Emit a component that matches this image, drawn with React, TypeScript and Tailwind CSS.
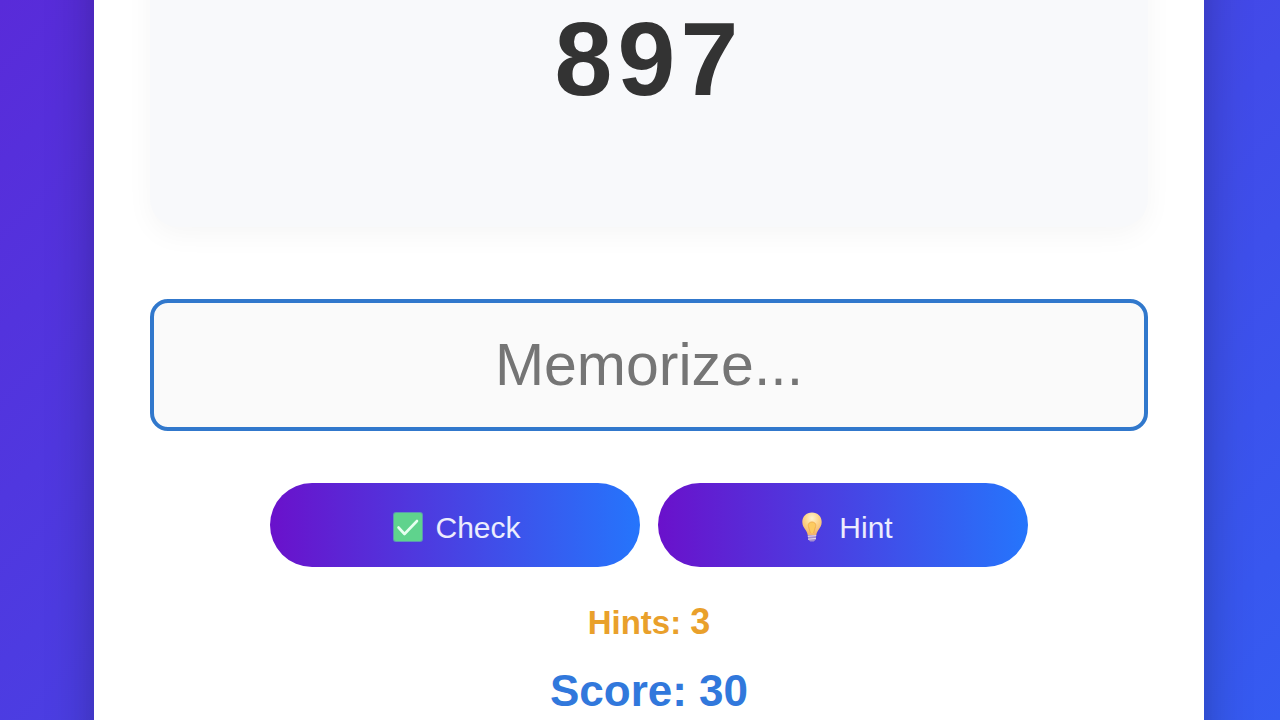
import { useState } from 'react'

const CheckIcon = () => (
  <svg viewBox="0 0 38 38" className="size-[38px]" aria-hidden="true">
    <rect x="4" y="4" width="30" height="30" rx="3" fill="#5b97b4" />
    <rect x="5" y="5" width="28" height="28" rx="2" fill="#5fd38d" />
    <path
      d="M9.5 19.5 L15.5 26 L28 13"
      fill="none"
      stroke="#e6fff0"
      strokeWidth="2.6"
      strokeLinecap="round"
      strokeLinejoin="round"
    />
  </svg>
)

const BulbIcon = () => (
  <svg viewBox="0 0 38 38" className="size-[38px]" aria-hidden="true">
    <defs>
      <radialGradient id="bulb" cx="0.5" cy="0.25" r="0.7">
        <stop offset="0" stopColor="#fff3d0" />
        <stop offset="0.5" stopColor="#fdd58a" />
        <stop offset="1" stopColor="#f3b46c" />
      </radialGradient>
    </defs>
    <path
      d="M19 4.5 C13.3 4.5 9.3 8.6 9.3 14 C9.3 17.6 11 19.8 12.6 22 C14 24 14.4 25.6 14.8 27.5 H23.2 C23.6 25.6 24 24 25.4 22 C27 19.8 28.7 17.6 28.7 14 C28.7 8.6 24.7 4.5 19 4.5 Z"
      fill="url(#bulb)"
    />
    <path
      d="M17.4 25 L15.4 18.4 C14.6 15.4 17.2 14 19 14 C20.8 14 23.4 15.4 22.6 18.4 L20.6 25"
      fill="#fccb60"
      stroke="#f3b04e"
      strokeWidth="1"
    />
    <path d="M14.8 27 H23.2 L22.8 31.6 L20.8 33.6 H17.2 L15.2 31.6 Z" fill="#a58fd0" />
    <path d="M14.8 28.4 L23.2 27.6 M15 31.2 L23 30.4" stroke="#e8d8e8" strokeWidth="1" />
  </svg>
)

const GameButton = ({
  icon,
  children,
  onClick,
}: {
  icon: React.ReactNode
  children: React.ReactNode
  onClick?: () => void
}) => (
  <button
    type="button"
    onClick={onClick}
    className="flex h-[84px] w-[370px] items-center justify-center gap-2 rounded-full bg-[linear-gradient(to_right,#6a11cb,#2575fc)] pt-1 text-[30px] text-white/90"
  >
    {icon}
    {children}
  </button>
)

export default function App() {
  const [answer, setAnswer] = useState('')

  return (
    <div className="flex min-h-screen overflow-hidden bg-[linear-gradient(135deg,#592bd9,#355bf1)] pr-[76px] pl-[94px] font-['Liberation_Sans',Arial,sans-serif]">
      <main className="-my-14 flex-1 bg-white px-14 pb-14 text-center shadow-[0_0_44px_rgba(0,0,0,0.26)]">
        <div className="rounded-b-[28px] bg-[#f8f9fb] pt-14 pb-[109px] shadow-[0_8px_28px_rgba(0,0,0,0.04)]">
          <p className="text-[104px] leading-[118px] font-bold tracking-wider text-[#333]">897</p>
        </div>

        <input
          type="text"
          aria-label="Your answer"
          placeholder="Memorize..."
          value={answer}
          onChange={(e) => setAnswer(e.target.value)}
          className="mt-18 block h-[132px] w-full rounded-[18px] border-4 border-[#3178cc] bg-[#fafafa] text-center text-[59px] text-[#333] outline-none placeholder:text-[#757575]"
        />

        <div className="mt-[52px] flex justify-center gap-[18px]">
          <GameButton icon={<CheckIcon />}>Check</GameButton>
          <GameButton icon={<BulbIcon />}>Hint</GameButton>
        </div>

        <p className="mt-[35px] text-[33px] leading-10 font-bold text-[#e9a02b]">
          Hints: <span className="text-[36px]">3</span>
        </p>
        <p className="mt-6 text-[44px] leading-12 font-bold text-[#3178dc]">Score: 30</p>
      </main>
    </div>
  )
}
